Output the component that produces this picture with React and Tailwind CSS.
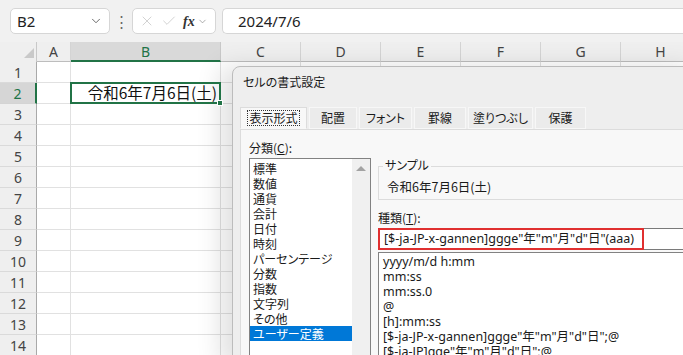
import { ChevronDown, X, Check } from "lucide-react";

const latin = { fontFamily: '"Noto Sans", "Noto Sans CJK JP", sans-serif' };
const ui = { fontFamily: '"Noto Sans CJK JP", sans-serif' };

const cols = [
  { name: "A", w: "w-[34px]" },
  { name: "B", w: "w-[150px]", active: true },
  { name: "C", w: "w-[80px]" },
  { name: "D", w: "w-[80px]" },
  { name: "E", w: "w-[80px]" },
  { name: "F", w: "w-[80px]" },
  { name: "G", w: "w-[80px]" },
  { name: "H", w: "w-[80px]" },
];

const rows = [1, 2, 3, 4, 5, 6, 7, 8, 9, 10, 11, 12, 13, 14];

const categories = [
  "標準",
  "数値",
  "通貨",
  "会計",
  "日付",
  "時刻",
  "パーセンテージ",
  "分数",
  "指数",
  "文字列",
  "その他",
  "ユーザー定義",
];

const formats = [
  "yyyy/m/d h:mm",
  "mm:ss",
  "mm:ss.0",
  "@",
  "[h]:mm:ss",
  '[$-ja-JP-x-gannen]ggge"年"m"月"d"日";@',
  '[$-ja-JP]gge"年"m"月"d"日";@',
];

const tabs = [
  { label: "表示形式", w: "w-[67px]", active: true },
  { label: "配置", w: "w-[48px]" },
  { label: "フォント", w: "w-[53px]" },
  { label: "罫線", w: "w-[52px]" },
  { label: "塗りつぶし", w: "w-[65px]" },
  { label: "保護", w: "w-[51px]" },
];

function FormulaBar() {
  return (
    <div className="flex h-[42px] items-center bg-[#f1f1f1] pl-[10px]">
      <div className="flex h-[26px] w-[100px] items-center justify-between rounded-[5px] border border-[#d6d6d6] bg-white pl-[6px] pr-[6px]">
        <span className="text-[15px] text-[#222]" style={latin}>B2</span>
        <ChevronDown size={14} strokeWidth={1.5} className="text-[#555]" />
      </div>
      <div className="flex w-[22px] justify-center text-[15px] leading-none text-[#666]">⋮</div>
      <div className="flex h-[26px] w-[84px] items-center gap-[6px] rounded-[5px] border border-[#d6d6d6] bg-white pl-[6px]">
        <X size={16} strokeWidth={1} className="text-[#bbb]" />
        <Check size={16} strokeWidth={1} className="text-[#bbb]" />
        <span className="text-[14px] font-bold italic text-[#333]" style={{ fontFamily: '"Liberation Serif", serif' }}>
          fx
        </span>
        <ChevronDown size={11} strokeWidth={1.5} className="-ml-[4px] text-[#888]" />
      </div>
      <div className="ml-[6px] flex h-[26px] flex-1 items-center rounded-l-[5px] border border-r-0 border-[#d6d6d6] bg-white pl-[15px]">
        <span className="text-[15px] text-[#222]" style={latin}>2024/7/6</span>
      </div>
    </div>
  );
}

function Sheet() {
  return (
    <div className="flex flex-col bg-white" style={latin}>
      <div className="flex h-[20px] bg-[#efefef]">
        <div className="relative w-[37px] shrink-0 border-r border-[#c8c8c8]">
          <div className="absolute bottom-[4px] right-[2px] h-0 w-0 border-b-[10px] border-l-[10px] border-b-[#c9c9c9] border-l-transparent" />
        </div>
        {cols.map((c) => (
          <div
            key={c.name}
            className={`${c.w} flex shrink-0 items-center justify-center border-r text-[14px] ${
              c.active
                ? "border-b-2 border-r-[#c8c8c8] border-b-[#217346] bg-[#d9d9d9] text-[#217346]"
                : "border-b border-[#d4d4d4] border-b-[#bdbdbd] text-[#444]"
            }`}
          >
            {c.name}
          </div>
        ))}
      </div>
      {rows.map((r) => (
        <div key={r} className="flex h-[21px]">
          <div
            className={`flex w-[37px] shrink-0 items-center justify-center border-b text-[14px] ${
              r === 2
                ? "border-r-2 border-b-[#d4d4d4] border-r-[#217346] bg-[#d6d6d6] text-[#217346]"
                : "border-r border-b-[#dadada] border-r-[#a9a9a9] bg-[#efefef] text-[#444]"
            }`}
          >
            {r}
          </div>
          {cols.map((c) => (
            <div
              key={c.name}
              className={`${c.w} relative shrink-0 border-b border-r border-[#e1e1e1]`}
            >
              {r === 2 && c.name === "B" && (
                <div className="absolute -left-[1px] -top-[1px] z-10 flex h-[22px] w-[151px] items-center justify-end border-2 border-[#217346] pr-[2px]">
                  <span className="text-[15.5px] text-[#111]" style={ui}>令和6年7月6日(土)</span>
                  <div className="absolute -bottom-[4px] -right-[4px] h-[6px] w-[6px] border border-white bg-[#217346]" />
                </div>
              )}
            </div>
          ))}
        </div>
      ))}
    </div>
  );
}

function Dialog() {
  return (
    <div
      className="absolute left-[232px] top-[66px] h-[300px] w-[470px] rounded-tl-[8px] border border-[#bcbcbc] bg-[#eeeeee] shadow-[-12px_0_24px_rgba(0,0,0,0.12)] [font-feature-settings:'palt']"
      style={ui}
    >
      <div className="flex h-[30px] items-center pl-[10px] text-[12px] text-[#1a1a1a]">
        セルの書式設定
      </div>
      <div className="mt-[10px] flex h-[22px] gap-[2px] pl-[7px]">
        {tabs.map((t) => (
          <div
            key={t.label}
            className={`${t.w} flex items-center justify-center border text-[12px] text-[#1a1a1a] ${
              t.active
                ? "border-[#dcdcdc] border-b-[#f8f8f8] bg-[#f8f8f8]"
                : "border-[#f7f7f7] bg-[#ebebeb]"
            }`}
          >
            {t.active ? (
              <span className="border border-dotted border-[#333] px-[1px] leading-[14px]">{t.label}</span>
            ) : (
              t.label
            )}
          </div>
        ))}
      </div>
      <div className="ml-[7px] flex h-[240px] border border-[#dcdcdc] bg-[#f8f8f8] pl-[8px] pt-[10px] text-[12px] text-[#1a1a1a]">
        <div className="flex w-[122px] shrink-0 flex-col">
          <div className="h-[18px] leading-[16px]">
            分類(<span className="underline">C</span>):
          </div>
          <div className="flex h-[210px] border border-[#828282] bg-white">
            <div className="flex flex-1 flex-col overflow-hidden pt-[2px]">
              {categories.map((c) => (
                <div
                  key={c}
                  className={`h-[15px] overflow-hidden whitespace-nowrap pl-[3px] text-[12px] leading-[15px] ${
                    c === "ユーザー定義" ? "bg-[#0078d7] text-white" : ""
                  }`}
                >
                  {c}
                </div>
              ))}
            </div>
            <div className="flex w-[18px] flex-col items-center bg-[#f0f0f0] pt-[7px]">
              <div className="h-0 w-0 border-x-[5px] border-b-[5px] border-x-transparent border-b-[#a3a3a3]" />
            </div>
          </div>
        </div>
        <div className="ml-[7px] flex flex-1 flex-col">
          <div className="relative mt-[26px] h-[34px] border border-r-0 border-[#dcdcdc]">
            <span className="absolute -top-[10px] left-[4px] bg-[#f8f8f8] px-[2px] leading-[16px]">サンプル</span>
            <div className="pl-[8px] pt-[12px] text-[12.5px] leading-[16px]">令和6年7月6日(土)</div>
          </div>
          <div className="mt-[7px] flex h-[21px] items-center">
            種類(<span className="underline">T</span>):
          </div>
          <div className="flex h-[22px] items-center border border-r-0 border-[#7a7a7a] bg-white">
            <div
              className="-ml-[1px] flex h-[22px] w-[266px] items-center border-2 border-[#e03030] pl-[4px] text-[12.5px]"
              style={latin}
            >
              [$-ja-JP-x-gannen]ggge"年"m"月"d"日"(aaa)
            </div>
          </div>
          <div className="mt-[2px] flex-1 border-l border-t border-[#828282] bg-white pl-[4px] pt-[1px]">
            {formats.map((f) => (
              <div key={f} className="h-[15px] whitespace-nowrap text-[12.5px] leading-[15px]" style={latin}>
                {f}
              </div>
            ))}
          </div>
        </div>
      </div>
    </div>
  );
}

export default function App() {
  return (
    <div className="relative h-[355px] w-[683px] overflow-hidden bg-[#f1f1f1]">
      <FormulaBar />
      <Sheet />
      <Dialog />
    </div>
  );
}
